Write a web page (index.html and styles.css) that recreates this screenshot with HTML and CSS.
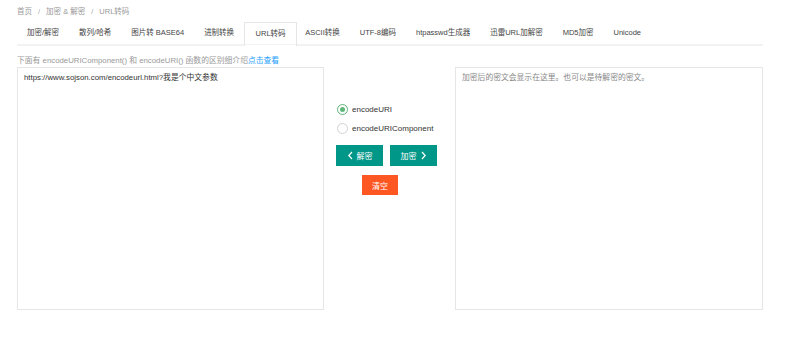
FILE: index.html
```html
<!DOCTYPE html>
<html lang="zh-CN">
<head>
    <meta charset="UTF-8">
    <meta name="viewport" content="width=device-width, initial-scale=1.0">
    <title>URL转码</title>
    <link rel="stylesheet" href="styles.css">
</head>
<body>
    <div class="page">
        <div class="breadcrumb">
            <a href="#">首页</a><span class="sep">/</span><a href="#">加密 &amp; 解密</a><span class="sep">/</span><span>URL转码</span>
        </div>

        <ul class="tabs">
            <li>加密/解密</li>
            <li>散列/哈希</li>
            <li>图片转 BASE64</li>
            <li>进制转换</li>
            <li class="active">URL转码</li>
            <li>ASCII转换</li>
            <li>UTF-8编码</li>
            <li>htpasswd生成器</li>
            <li>迅雷URL加解密</li>
            <li>MD5加密</li>
            <li>Unicode</li>
        </ul>

        <div class="hint">下面有 encodeURIComponent() 和 encodeURI() 函数的区别细介绍<a href="#">点击查看</a></div>

        <div class="workspace">
            <div class="box">https://www.sojson.com/encodeurl.html?我是个中文参数</div>

            <div class="controls">
                <label class="radio checked"><span class="dot"></span>encodeURI</label>
                <label class="radio"><span class="dot"></span>encodeURIComponent</label>
                <div class="btn-row">
                    <button class="btn">
                        <svg width="7" height="9" viewBox="0 0 7 9"><polyline points="5,1 1.8,4.5 5,8" fill="none" stroke="#fff" stroke-width="1.2"/></svg>
                        解密
                    </button>
                    <button class="btn">
                        加密
                        <svg width="7" height="9" viewBox="0 0 7 9"><polyline points="2,1 5.2,4.5 2,8" fill="none" stroke="#fff" stroke-width="1.2"/></svg>
                    </button>
                </div>
                <button class="btn btn-clear">清空</button>
            </div>

            <div class="box placeholder">加密后的密文会显示在这里。也可以是待解密的密文。</div>
        </div>
    </div>
</body>
</html>
```

FILE: styles.css
```css
body {
    margin: 0;
    background: #fff;
    font-family: "Liberation Sans", Arial, "Noto Sans CJK SC", sans-serif;
    font-size: 7.5px;
    color: #333;
}
.page {
    padding: 0 37px 0 17px;
}
.breadcrumb {
    padding-top: 6px;
    line-height: 12px;
    color: #999;
}
.breadcrumb a {
    color: #999;
    text-decoration: none;
}
.breadcrumb .sep {
    margin: 0 6px;
    color: #aaa;
}
.tabs {
    list-style: none;
    margin: 4px 0 0;
    padding: 0;
    display: flex;
    border-bottom: 2px solid #f2f2f2;
    height: 22px;
}
.tabs li {
    padding: 0 10px;
    line-height: 22px;
    height: 22px;
    color: #444;
    white-space: nowrap;
}
.tabs li.active {
    padding: 0 10px;
    min-width: 31px;
    border: 1px solid #e6e6e6;
    border-bottom: 2px solid #fff;
    text-align: center;
}
.tabs li.active + li {
    padding-left: 8px;
}
.hint {
    margin-top: 9px;
    line-height: 12px;
    font-size: 7.8px;
    color: #999;
}
.hint a {
    color: #1E9FFF;
    text-decoration: none;
}
.workspace {
    display: grid;
    grid-template-columns: 307px 1fr 308px;
}
.box {
    height: 231px;
    border: 1px solid #e6e6e6;
    box-shadow: 0 1px 1px rgba(0,0,0,0.04);
    padding: 5px 6px;
    line-height: 10px;
    font-size: 7.8px;
    color: #333;
}
.placeholder {
    color: #888;
}
.controls {
    padding: 33px 0 0 13px;
    display: flex;
    flex-direction: column;
    align-items: flex-start;
}
.radio {
    display: flex;
    align-items: center;
    height: 19px;
    font-size: 8px;
    color: #333;
}
.radio .dot {
    box-sizing: border-box;
    width: 11px;
    height: 11px;
    border: 1px solid #d2d2d2;
    border-radius: 50%;
    margin-right: 4px;
    position: relative;
}
.radio.checked .dot {
    border-color: #5FB878;
}
.radio.checked .dot::after {
    content: "";
    position: absolute;
    left: 2px;
    top: 2px;
    width: 5px;
    height: 5px;
    border-radius: 50%;
    background: #5FB878;
}
.btn-row {
    display: flex;
    gap: 7px;
    margin-top: 7px;
    margin-left: -1px;
}
.btn {
    border: none;
    background: #009688;
    color: #fff;
    font-family: inherit;
    font-size: 8px;
    width: 47px;
    height: 21px;
    padding: 0;
    display: flex;
    align-items: center;
    justify-content: center;
    gap: 3px;
}
.btn-clear {
    background: #FF5722;
    width: 36px;
    height: 20px;
    margin: 9px 0 0 25px;
}
```
